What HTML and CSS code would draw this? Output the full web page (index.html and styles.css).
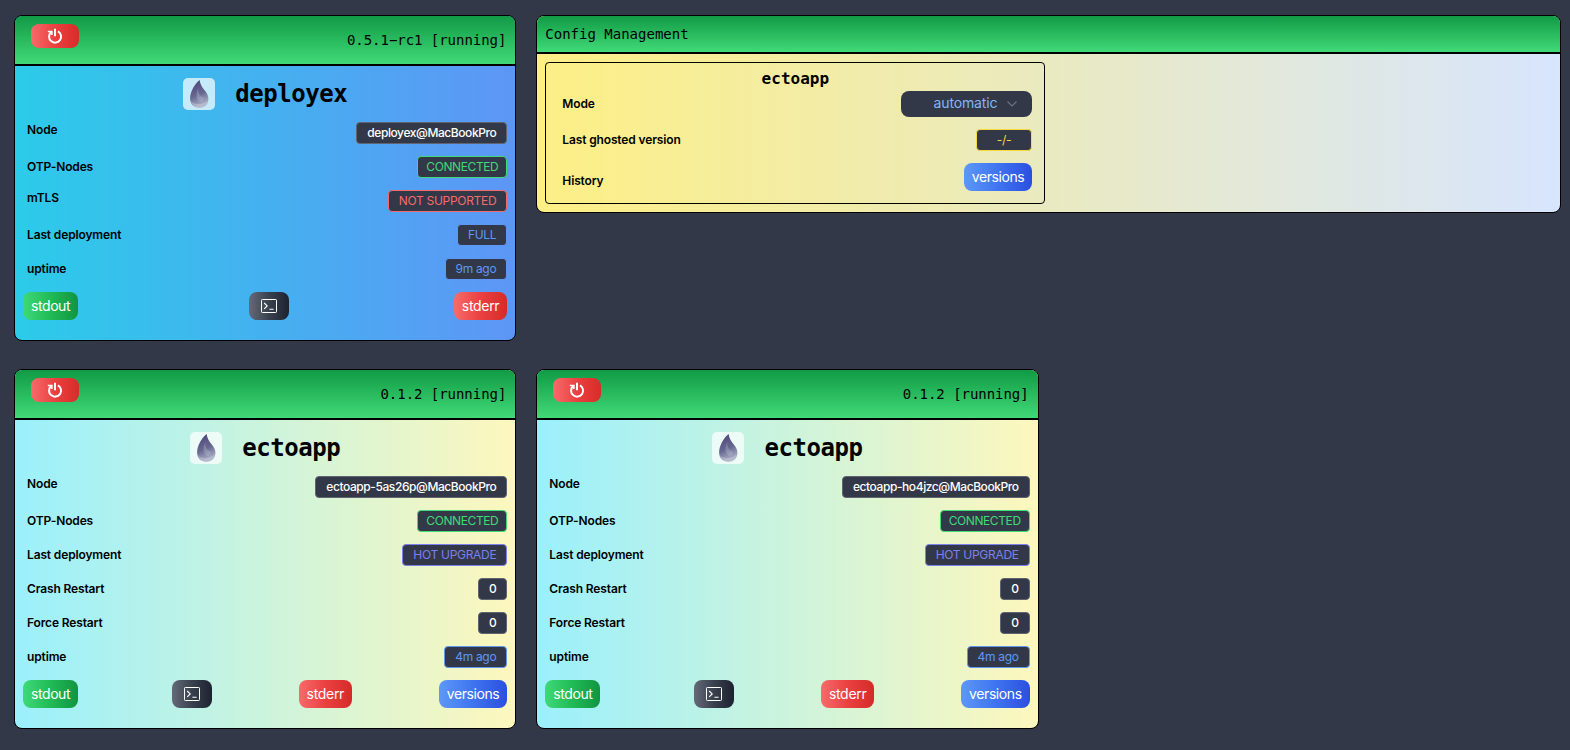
FILE: index.html
```html
<!DOCTYPE html>
<html lang="en">
<head>
<meta charset="utf-8">
<title>Deployex</title>
<link rel="stylesheet" href="styles.css">
</head>
<body>
<svg class="sprite" aria-hidden="true">
  <defs>
    <linearGradient id="drop-fill" x1="0" y1="0" x2="0.3" y2="1">
      <stop offset="0" stop-color="#4b417b"/>
      <stop offset="0.6" stop-color="#67678f"/>
      <stop offset="1" stop-color="#a9aec4"/>
    </linearGradient>
    <symbol id="power" viewBox="0 0 16 16">
      <path d="M8 .8v7.400M11 3.400A6 6 0 1 1 4 4.200" fill="none" stroke="#fff" stroke-width="2"/>
      <path d="M.8 3.400h4.100v3.700" fill="none" stroke="#fff" stroke-width="1.5"/>
    </symbol>
    <symbol id="terminal" viewBox="0 0 16 14">
      <rect x=".5" y=".5" width="15" height="13" rx=".8" fill="none" stroke="#fff"/>
      <path d="M3.2 4l3 2.9-3 2.9M8.4 10.3h4.2" fill="none" stroke="#fff" stroke-width="1.1"/>
    </symbol>
    <symbol id="drop" viewBox="0 0 32 32">
      <path d="M16.6 2c.7 4.600 2.300 7 5 10.200 2.200 2.700 3.800 5.100 3.800 8.600 0 5.500-3.600 9-9 9-5.600 0-9.300-3.700-9.300-9.500C7.100 13.500 12.200 5.300 16.600 2z" fill="url(#drop-fill)"/>
      <path d="M8 23c2 2.500 5 3.300 8.500 3 3-.3 6-1.500 8-3.500-1 4.500-4 7.300-8.200 7.300-4.300 0-7.300-2.600-8.300-6.800z" fill="#c8ccda" opacity=".45"/>
      <path d="M15.500 10c-1 5 1.500 8 5 9.500 1 2-.5 4.500-3 4.800-4-2-5.500-8-2-14.300z" fill="#b4c0d0" opacity=".35"/>
    </symbol>
  </defs>
</svg>
<main class="board">
  <section class="card card-host">
    <header class="card-header">
      <button class="btn-power"><svg class="icon-power"><use href="#power"/></svg></button>
      <span class="status">0.5.1−rc1 [running]</span>
    </header>
    <div class="card-body">
      <div class="title"><span class="logo"><svg><use href="#drop"/></svg></span><h2>deployex</h2></div>
      <div class="row raised"><span class="label">Node</span><span class="badge neutral">deployex@MacBookPro</span></div>
      <div class="row"><span class="label">OTP-Nodes</span><span class="badge green">CONNECTED</span></div>
      <div class="row raised"><span class="label">mTLS</span><span class="badge red">NOT SUPPORTED</span></div>
      <div class="row"><span class="label">Last deployment</span><span class="badge blue">FULL</span></div>
      <div class="row"><span class="label">uptime</span><span class="badge blue">9m ago</span></div>
      <div class="actions">
        <button class="btn btn-green">stdout</button>
        <button class="btn btn-dark"><svg class="icon-term"><use href="#terminal"/></svg></button>
        <button class="btn btn-red">stderr</button>
      </div>
    </div>
  </section>

  <section class="card card-config">
    <header class="card-header config-header">Config Management</header>
    <div class="config-body">
      <div class="config-box">
        <h3>ectoapp</h3>
        <div class="row"><span class="label">Mode</span><span class="select"><span class="select-value">automatic</span><svg class="chevron" viewBox="0 0 10 6"><path d="M.5.5L5 5 9.500.5" fill="none" stroke="#6b7280" stroke-width="1.2"/></svg></span></div>
        <div class="row"><span class="label">Last ghosted version</span><span class="badge yellow">-/-</span></div>
        <div class="row lowered"><span class="label">History</span><button class="btn btn-blue">versions</button></div>
      </div>
    </div>
  </section>

  <section class="card card-app">
    <header class="card-header">
      <button class="btn-power"><svg class="icon-power"><use href="#power"/></svg></button>
      <span class="status">0.1.2 [running]</span>
    </header>
    <div class="card-body">
      <div class="title"><span class="logo"><svg><use href="#drop"/></svg></span><h2>ectoapp</h2></div>
      <div class="row raised"><span class="label">Node</span><span class="badge neutral">ectoapp-5as26p@MacBookPro</span></div>
      <div class="row"><span class="label">OTP-Nodes</span><span class="badge green">CONNECTED</span></div>
      <div class="row"><span class="label">Last deployment</span><span class="badge indigo">HOT UPGRADE</span></div>
      <div class="row"><span class="label">Crash Restart</span><span class="badge neutral">0</span></div>
      <div class="row"><span class="label">Force Restart</span><span class="badge neutral">0</span></div>
      <div class="row"><span class="label">uptime</span><span class="badge blue">4m ago</span></div>
      <div class="actions">
        <button class="btn btn-green">stdout</button>
        <button class="btn btn-dark"><svg class="icon-term"><use href="#terminal"/></svg></button>
        <button class="btn btn-red">stderr</button>
        <button class="btn btn-blue">versions</button>
      </div>
    </div>
  </section>

  <section class="card card-app">
    <header class="card-header">
      <button class="btn-power"><svg class="icon-power"><use href="#power"/></svg></button>
      <span class="status">0.1.2 [running]</span>
    </header>
    <div class="card-body">
      <div class="title"><span class="logo"><svg><use href="#drop"/></svg></span><h2>ectoapp</h2></div>
      <div class="row raised"><span class="label">Node</span><span class="badge neutral">ectoapp-ho4jzc@MacBookPro</span></div>
      <div class="row"><span class="label">OTP-Nodes</span><span class="badge green">CONNECTED</span></div>
      <div class="row"><span class="label">Last deployment</span><span class="badge indigo">HOT UPGRADE</span></div>
      <div class="row"><span class="label">Crash Restart</span><span class="badge neutral">0</span></div>
      <div class="row"><span class="label">Force Restart</span><span class="badge neutral">0</span></div>
      <div class="row"><span class="label">uptime</span><span class="badge blue">4m ago</span></div>
      <div class="actions">
        <button class="btn btn-green">stdout</button>
        <button class="btn btn-dark"><svg class="icon-term"><use href="#terminal"/></svg></button>
        <button class="btn btn-red">stderr</button>
        <button class="btn btn-blue">versions</button>
      </div>
    </div>
  </section>
</main>
</body>
</html>
```
FILE: styles.css
```css
* { box-sizing: border-box; }

body {
  margin: 0;
  background: #323848;
  color: #000;
  font-family: Inter, "Liberation Sans", sans-serif;
}

h2, h3 { margin: 0; font-family: "DejaVu Sans Mono", monospace; font-weight: 700; }
button { border: 0; font-family: inherit; color: #fff; }
svg { display: block; }
.sprite { width: 0; height: 0; }

.board {
  display: grid;
  grid-template-columns: repeat(3, 1fr);
  column-gap: 20px;
  row-gap: 28px;
  align-items: start;
  height: 750px;
  grid-template-rows: 326px 360px;
  padding: 15px 9px 0 14px;
}

.card { border: 1px solid #000; border-radius: 8px; overflow: hidden; }
.card-host { height: 326px; background: linear-gradient(to right, #2ccbe9, #5d96f6); }
.card-app { height: 360px; background: linear-gradient(to right, #9bf0fc, #fdf7bd); }
.card-config { grid-column: span 2; height: 198px; background: linear-gradient(to right, #fdef85, #d7e5fd); }

.card-header {
  display: flex;
  justify-content: space-between;
  height: 50px;
  padding: 8px 9px 0 16px;
  border-bottom: 2px solid #000;
  background: linear-gradient(to bottom, #119a45, #41da78);
  font: 14px/32px "DejaVu Sans Mono", monospace;
}
.status { letter-spacing: -.04px; }
.config-header { height: 38px; padding: 0 8px; line-height: 37px; }

.btn-power {
  display: grid;
  place-items: center;
  width: 48px;
  height: 24px;
  padding: 0;
  border-radius: 8px;
  background: linear-gradient(to right, #f86b6b, #ea4040, #d72c28);
}
.icon-power { width: 16px; height: 16px; }

.card-body { display: flex; flex-direction: column; gap: 12px; padding: 12px 8px 0; }
.title { display: flex; justify-content: center; gap: 20px; height: 32px; }
.title h2 { font-size: 24px; line-height: 33px; letter-spacing: -.45px; }
.logo { width: 32px; height: 32px; border-radius: 5px; background: rgba(255, 255, 255, .7); }
.logo svg { width: 32px; height: 32px; }

.row { display: flex; justify-content: space-between; align-items: center; padding-left: 4px; }
.label { font-size: 12px; line-height: 16px; font-weight: 600; letter-spacing: -.14px; }
.raised .label { line-height: 15px; margin-bottom: 7px; }
.lowered .label { line-height: 15px; margin-top: 7px; }

.badge {
  height: 22px;
  padding: 0 10px;
  border: 1px solid;
  border-radius: 4px;
  background: #323848;
  font-size: 12px;
  line-height: 20px;
  letter-spacing: -.3px;
  white-space: nowrap;
}
.neutral { color: #fff; border-color: #5f6470; font-weight: 500; letter-spacing: -.42px; }
.green { padding: 0 8px; color: #41da78; letter-spacing: -.4px; }
.red { color: #f56b6b; }
.blue { color: #5d98f5; }
.indigo { color: #7c7ff0; }
.yellow { padding: 0 20px; color: #f8da3c; }

.actions { display: flex; justify-content: space-between; }
.btn {
  height: 28px;
  padding: 0 8px;
  border-radius: 8px;
  font-size: 14px;
  line-height: 28px;
  letter-spacing: -.42px;
}
.btn-green { background: linear-gradient(to right, #3fda78, #20bb56, #119440); }
.btn-dark { width: 40px; padding: 0 12px; margin-left: 7px; background: linear-gradient(to right, #646a78, #3a414e, #1c2230); }
.btn-red { letter-spacing: -.3px; background: linear-gradient(to right, #f86b6b, #ea4040, #d52b28); }
.btn-blue { background: linear-gradient(to right, #5d98f7, #3f74f0, #2b4fe0); }
.icon-term { width: 16px; height: 14px; }

.config-body { padding: 8px; }
.config-box {
  display: flex;
  flex-direction: column;
  gap: 12px;
  width: 500px;
  height: 142px;
  padding: 4px 12px 0;
  border: 1px solid #000;
  border-radius: 4px;
}
.config-box h3 { margin-bottom: -12px; text-align: center; font-size: 16px; line-height: 24px; }
.select {
  display: flex;
  align-items: center;
  justify-content: flex-end;
  gap: 10px;
  width: 131px;
  height: 26px;
  padding-right: 15px;
  border-radius: 8px;
  background: #323848;
  color: #86b4f4;
  font-size: 14px;
  letter-spacing: -.15px;
}
.select-value { line-height: 24px; padding-bottom: 2px; }
.chevron { width: 10px; height: 6px; }
```
